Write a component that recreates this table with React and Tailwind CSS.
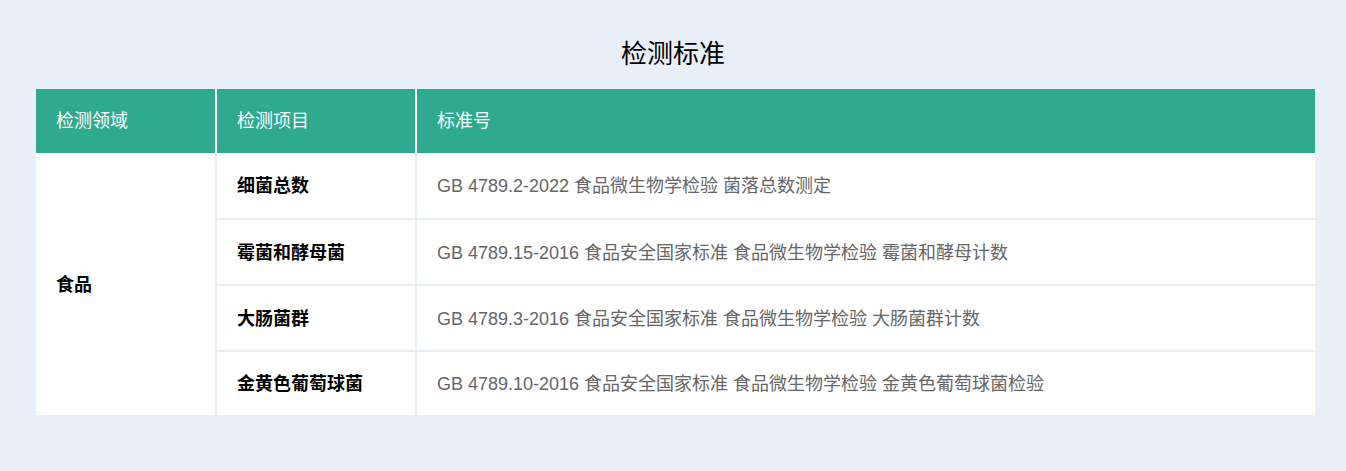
export default function App() {
  const rows = [
    ["细菌总数", "GB 4789.2-2022 食品微生物学检验 菌落总数测定"],
    ["霉菌和酵母菌", "GB 4789.15-2016 食品安全国家标准 食品微生物学检验 霉菌和酵母计数"],
    ["大肠菌群", "GB 4789.3-2016 食品安全国家标准 食品微生物学检验 大肠菌群计数"],
    ["金黄色葡萄球菌", "GB 4789.10-2016 食品安全国家标准 食品微生物学检验 金黄色葡萄球菌检验"],
  ];
  return (
    <div
      className="w-[1346px] h-[471px] bg-[#e8eff7] pt-[37px]"
      style={{ fontFamily: '"Liberation Sans", "Noto Sans CJK SC", sans-serif' }}
    >
      <h2 className="text-center text-[26px] leading-[34px] text-black">检测标准</h2>
      <table className="ml-[36px] mt-[18px] w-[1279px] border-collapse table-fixed text-[18px]">
        <colgroup>
          <col className="w-[180px]" />
          <col className="w-[200px]" />
          <col />
        </colgroup>
        <thead>
          <tr className="bg-[#2eaa8f] text-white h-[64px]">
            <th className="text-left font-normal pl-[20px] pt-[1px] border-r-2 border-white">检测领域</th>
            <th className="text-left font-normal pl-[20px] pt-[1px] border-r-2 border-white">检测项目</th>
            <th className="text-left font-normal pl-[20px] pt-[1px]">标准号</th>
          </tr>
        </thead>
        <tbody className="bg-white">
          {rows.map((r, i) => (
            <tr key={i} className={i < 3 ? "h-[66px]" : "h-[64px]"}>
              {i === 0 && (
                <td rowSpan={4} className="pl-[20px] pt-[2px] font-bold text-black border-r-2 border-[#e8eef5]">
                  食品
                </td>
              )}
              <td
                className={`pl-[20px] pt-[2px] font-bold text-black border-r-2 border-[#e8eef5] ${
                  i < 3 ? "border-b-2" : ""
                }`}
              >
                {r[0]}
              </td>
              <td className={`pl-[20px] pt-[2px] text-[#666666] border-[#e8eef5] ${i < 3 ? "border-b-2" : ""}`}>
                {r[1]}
              </td>
            </tr>
          ))}
        </tbody>
      </table>
    </div>
  );
}
